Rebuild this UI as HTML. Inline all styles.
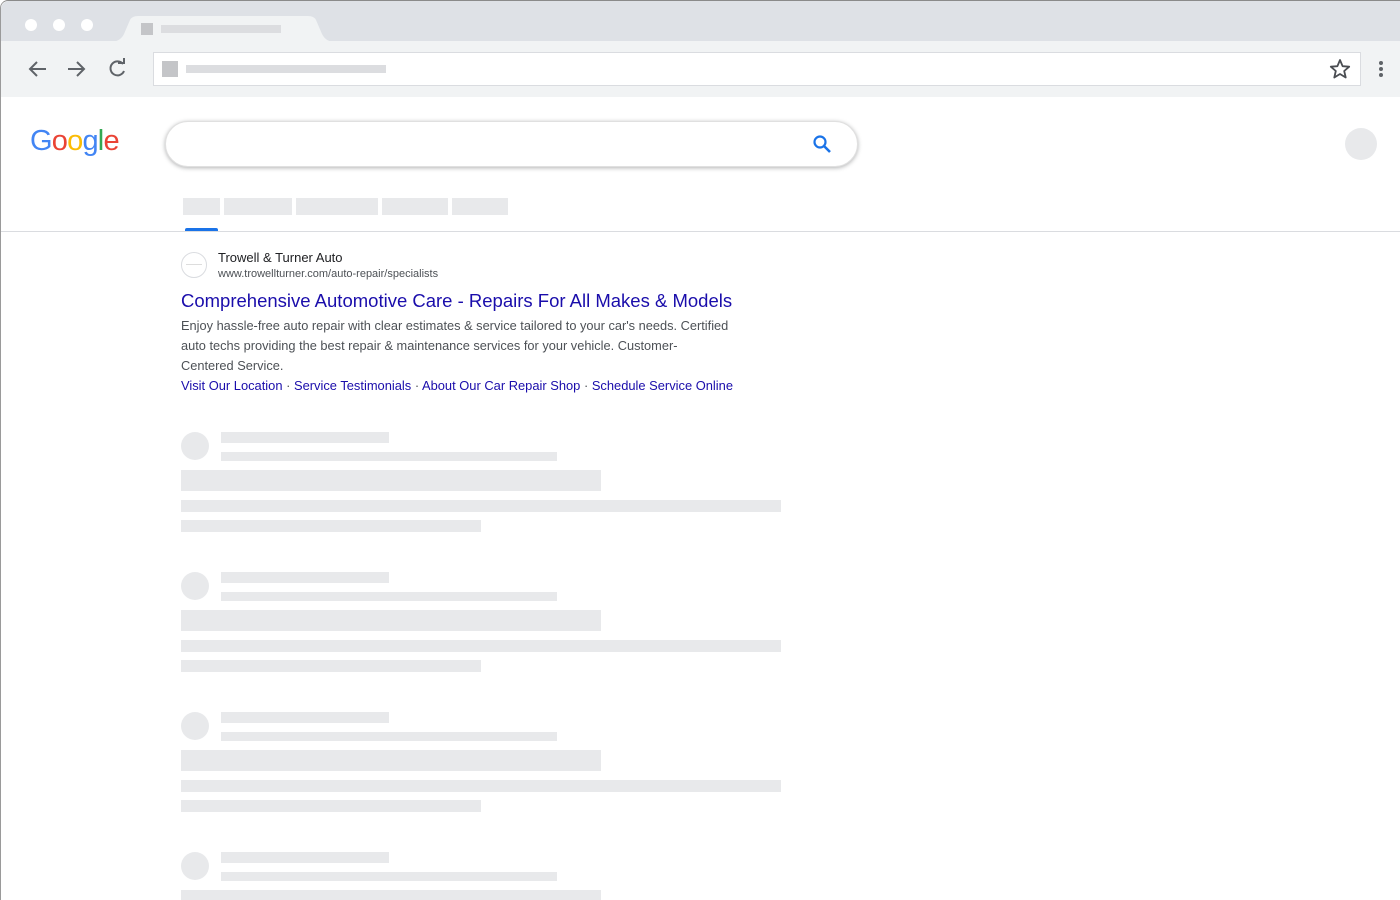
<!DOCTYPE html>
<html style="width:1400px;height:900px;overflow:hidden"><head><style>
*{margin:0;padding:0;box-sizing:border-box}
body{width:1400px;height:900px;overflow:hidden;background:#fff;font-family:"Liberation Sans",Arial,sans-serif;position:relative}
.abs{position:absolute}
.g{background:#e8e9eb;position:absolute}
a{color:#1a0dab;text-decoration:none}
</style></head><body>
<div class="abs" style="left:0;top:0;width:1400px;height:900px;border-left:1px solid #9a9a9a;border-top:1px solid #8a8a8a;border-top-left-radius:8px"></div>
<div class="abs" style="left:1px;top:1px;width:1399px;height:40px;background:#dee1e6;border-top-left-radius:8px"></div>
<div class="abs" style="left:25px;top:19px;width:12px;height:12px;border-radius:50%;background:#fff"></div>
<div class="abs" style="left:53px;top:19px;width:12px;height:12px;border-radius:50%;background:#fff"></div>
<div class="abs" style="left:81px;top:19px;width:12px;height:12px;border-radius:50%;background:#fff"></div>
<svg class="abs" style="left:110px;top:16px" width="225" height="26"><path d="M0 26 Q10 26 14 18 L20 4 Q22 0 28 0 L198 0 Q204 0 206 4 L212 18 Q216 26 225 26Z" fill="#f1f3f4"/></svg>
<div class="abs" style="left:141px;top:23px;width:12px;height:12px;background:#c4c5c8"></div>
<div class="abs" style="left:161px;top:25px;width:120px;height:8px;background:#dcdde0"></div>
<div class="abs" style="left:1px;top:41px;width:1399px;height:56px;background:#f1f3f4"></div>
<svg class="abs" style="left:26px;top:58px" width="110" height="22" stroke="#5f6368" stroke-width="2" fill="none">
<path d="M20 11H4M11 4L4 11L11 18"/>
<path d="M42 11H58M51 4L58 11L51 18"/>
<path d="M97 6A7 7 0 1 0 98 13"/><path d="M92 5H98V0" stroke-width="2"/>
</svg>
<div class="abs" style="left:153px;top:52px;width:1208px;height:34px;background:#fff;border:1px solid #dadce0"></div>
<div class="abs" style="left:162px;top:61px;width:16px;height:16px;background:#c4c5c8"></div>
<div class="abs" style="left:186px;top:65px;width:200px;height:8px;background:#dcdde0"></div>
<svg class="abs" style="left:1329px;top:58px" width="22" height="22"><path d="M11 2L13.6 8.2L20.2 8.7L15.2 13L16.7 19.5L11 16L5.3 19.5L6.8 13L1.8 8.7L8.4 8.2Z" fill="none" stroke="#4a4d52" stroke-width="1.8" stroke-linejoin="round"/></svg>
<div class="abs" style="left:1379px;top:61px;width:4px;height:4px;border-radius:50%;background:#5f6368"></div>
<div class="abs" style="left:1379px;top:67px;width:4px;height:4px;border-radius:50%;background:#5f6368"></div>
<div class="abs" style="left:1379px;top:73px;width:4px;height:4px;border-radius:50%;background:#5f6368"></div>
<div class="abs" style="left:30px;top:124px;font-size:29px;letter-spacing:-0.8px;font-weight:400;line-height:34px"><span style="color:#4285f4">G</span><span style="color:#ea4335">o</span><span style="color:#fbbc05">o</span><span style="color:#4285f4">g</span><span style="color:#34a853">l</span><span style="color:#ea4335">e</span></div>
<div class="abs" style="left:165px;top:121px;width:693px;height:46px;border-radius:23px;background:#fff;box-shadow:0 1px 4px rgba(32,33,36,.35);border:1px solid #e0e0e0"></div>
<svg class="abs" style="left:811px;top:133px" width="22" height="22"><circle cx="9" cy="9" r="5.5" fill="none" stroke="#1a73e8" stroke-width="2.2"/><path d="M13 13L19 19" stroke="#1a73e8" stroke-width="2.6"/></svg>
<div class="abs" style="left:1345px;top:128px;width:32px;height:32px;border-radius:50%;background:#e8e9eb"></div>
<div class="g" style="left:183px;top:198px;width:37px;height:17px"></div>
<div class="g" style="left:224px;top:198px;width:68px;height:17px"></div>
<div class="g" style="left:296px;top:198px;width:82px;height:17px"></div>
<div class="g" style="left:382px;top:198px;width:66px;height:17px"></div>
<div class="g" style="left:452px;top:198px;width:56px;height:17px"></div>
<div class="abs" style="left:185px;top:228px;width:33px;height:3px;background:#1a73e8;border-radius:2px 2px 0 0"></div>
<div class="abs" style="left:1px;top:231px;width:1399px;height:1px;background:#dadce0"></div>
<div class="abs" style="left:181px;top:252px;width:26px;height:26px;border-radius:50%;border:1px solid #dadce0"></div>
<div class="abs" style="left:186px;top:264px;width:16px;height:1px;background:#ddd"></div>
<div class="abs" style="left:218px;top:250px;font-size:13px;color:#202124">Trowell &amp; Turner Auto</div>
<div class="abs" style="left:218px;top:268px;font-size:11px;color:#4d5156">www.trowellturner.com/auto-repair/specialists</div>
<div class="abs" style="left:181px;top:290px;font-size:18.5px;color:#1a0dab">Comprehensive Automotive Care - Repairs For All Makes &amp; Models</div>
<div class="abs" style="left:181px;top:316px;width:556px;font-size:12.8px;line-height:20px;color:#4d5156">Enjoy hassle-free auto repair with clear estimates &amp; service tailored to your car's needs. Certified auto techs providing the best repair &amp; maintenance services for your vehicle. Customer-<br>Centered Service.</div>
<div class="abs" style="left:181px;top:378px;font-size:12.9px;color:#4d5156;white-space:nowrap"><a>Visit Our Location</a> · <a>Service Testimonials</a> · <a>About Our Car Repair Shop</a> · <a>Schedule Service Online</a></div>

<div class="g" style="left:181px;top:432px;width:28px;height:28px;border-radius:50%"></div>
<div class="g" style="left:221px;top:432px;width:168px;height:11px"></div>
<div class="g" style="left:221px;top:452px;width:336px;height:9px"></div>
<div class="g" style="left:181px;top:470px;width:420px;height:21px"></div>
<div class="g" style="left:181px;top:500px;width:600px;height:12px"></div>
<div class="g" style="left:181px;top:520px;width:300px;height:12px"></div>

<div class="g" style="left:181px;top:572px;width:28px;height:28px;border-radius:50%"></div>
<div class="g" style="left:221px;top:572px;width:168px;height:11px"></div>
<div class="g" style="left:221px;top:592px;width:336px;height:9px"></div>
<div class="g" style="left:181px;top:610px;width:420px;height:21px"></div>
<div class="g" style="left:181px;top:640px;width:600px;height:12px"></div>
<div class="g" style="left:181px;top:660px;width:300px;height:12px"></div>

<div class="g" style="left:181px;top:712px;width:28px;height:28px;border-radius:50%"></div>
<div class="g" style="left:221px;top:712px;width:168px;height:11px"></div>
<div class="g" style="left:221px;top:732px;width:336px;height:9px"></div>
<div class="g" style="left:181px;top:750px;width:420px;height:21px"></div>
<div class="g" style="left:181px;top:780px;width:600px;height:12px"></div>
<div class="g" style="left:181px;top:800px;width:300px;height:12px"></div>

<div class="g" style="left:181px;top:852px;width:28px;height:28px;border-radius:50%"></div>
<div class="g" style="left:221px;top:852px;width:168px;height:11px"></div>
<div class="g" style="left:221px;top:872px;width:336px;height:9px"></div>
<div class="g" style="left:181px;top:890px;width:420px;height:10px"></div>
</body></html>
